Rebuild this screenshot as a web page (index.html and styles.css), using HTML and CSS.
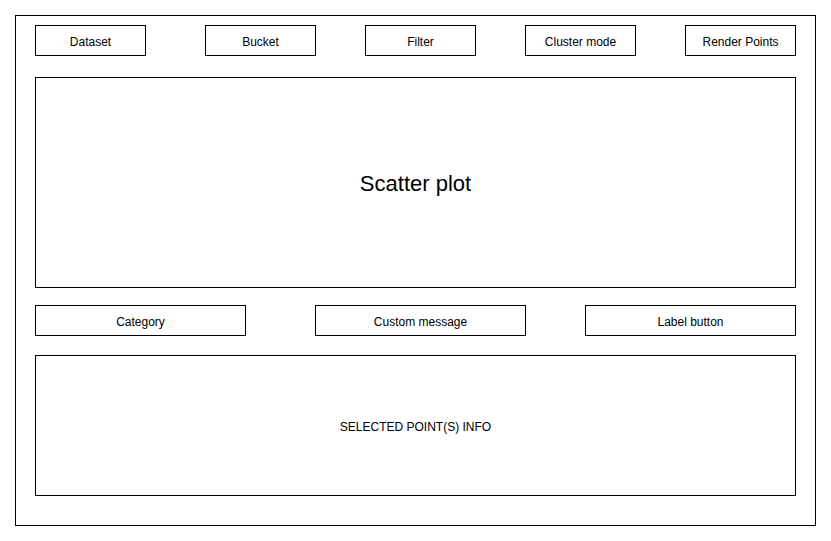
FILE: index.html
```html
<!DOCTYPE html>
<html>
<head>
<meta charset="utf-8">
<link rel="stylesheet" href="styles.css">
</head>
<body>
<div class="frame">
  <div class="toolbar">
    <div class="btn first">Dataset</div>
    <div class="btn">Bucket</div>
    <div class="btn">Filter</div>
    <div class="btn">Cluster mode</div>
    <div class="btn">Render Points</div>
  </div>
  <div class="plot">Scatter plot</div>
  <div class="controls">
    <div class="wide first">Category</div>
    <div class="wide second">Custom message</div>
    <div class="wide">Label button</div>
  </div>
  <div class="info">SELECTED POINT(S) INFO</div>
</div>
</body>
</html>
```

FILE: styles.css
```css
* { box-sizing: border-box; }
html, body { margin: 0; padding: 0; background: #fff; }
body {
  font-family: "Liberation Sans", Arial, sans-serif;
  color: #000;
  padding: 15px;
}
.frame {
  width: 801px;
  height: 511px;
  border: 1px solid #000;
  padding: 9px 19px 0 19px;
}
.toolbar {
  display: flex;
  gap: 49px;
}
.btn, .wide {
  height: 31px;
  border: 1px solid #000;
  display: flex;
  align-items: center;
  justify-content: center;
  font-size: 12px;
  padding-top: 2px;
}
.btn { width: 111px; }
.btn.first { margin-right: 10px; }
.plot {
  margin-top: 21px;
  height: 211px;
  border: 1px solid #000;
  display: flex;
  align-items: center;
  justify-content: center;
  font-size: 22px;
  padding-top: 2px;
}
.controls {
  display: flex;
  margin-top: 17px;
}
.wide { width: 211px; }
.wide.first { margin-right: 69px; }
.wide.second { margin-right: 59px; }
.info {
  margin-top: 19px;
  height: 141px;
  border: 1px solid #000;
  display: flex;
  align-items: center;
  justify-content: center;
  font-size: 12px;
  padding-top: 2px;
}
```
